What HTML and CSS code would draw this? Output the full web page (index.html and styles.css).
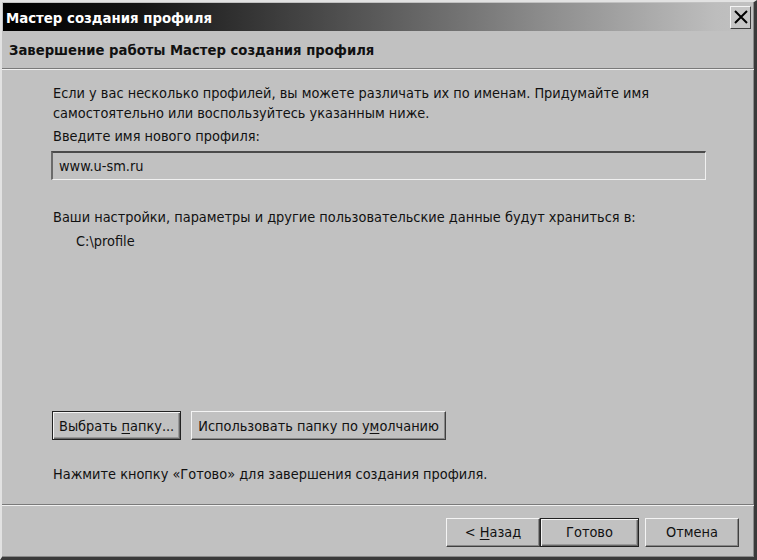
FILE: index.html
```html
<!DOCTYPE html>
<html lang="ru">
<head>
<meta charset="utf-8">
<title>Мастер создания профиля</title>
<link rel="stylesheet" href="styles.css">
</head>
<body>
<div class="window">
  <div class="titlebar">
    <span class="title">Мастер создания профиля</span>
    <span class="close" aria-label="Закрыть">
      <svg width="14" height="14" viewBox="0 0 14 14"><path d="M1 1 L13 13 M13 1 L1 13" stroke="#000" stroke-width="2"/></svg>
    </span>
  </div>
  <div class="header">Завершение работы Мастер создания профиля</div>
  <div class="content">
    <p class="intro">Если у вас несколько профилей, вы можете различать их по именам. Придумайте имя<br>самостоятельно или воспользуйтесь указанным ниже.</p>
    <p class="label">Введите имя нового профиля:</p>
    <div class="input">www.u-sm.ru</div>
    <p class="store">Ваши настройки, параметры и другие пользовательские данные будут храниться в:</p>
    <p class="path">C:\profile</p>
    <div class="spacer"></div>
    <div class="folder-buttons">
      <span class="btn btn-focus"><span>Выбрать <u>п</u>апку...</span></span>
      <span class="btn"><span>Использовать папку по у<u>м</u>олчанию</span></span>
    </div>
    <p class="finish">Нажмите кнопку «Готово» для завершения создания профиля.</p>
  </div>
  <div class="footer">
    <span class="btn btn-nav"><span>&lt; <u>Н</u>азад</span></span>
    <span class="btn btn-nav btn-focus"><span>Готово</span></span>
    <span class="btn btn-nav btn-cancel"><span>Отмена</span></span>
  </div>
</div>
</body>
</html>
```
FILE: styles.css
```css
* { box-sizing: border-box; }
html, body { margin: 0; padding: 0; }
body {
  width: 757px;
  height: 560px;
  background: #c1c1c1;
  font-family: "DejaVu Sans Condensed", "DejaVu Sans", sans-serif;
  font-size: 14.4px;
  color: #111;
  overflow: hidden;
}
.window {
  width: 757px;
  height: 560px;
  display: flex;
  flex-direction: column;
  background: #c1c1c1;
  border-style: solid;
  border-width: 2px 3px 3px 2px;
  border-color: #e2e2e2 #3a3a3a #3a3a3a #e2e2e2;
  box-shadow: inset -1px -1px 0 #8a8a8a;
}
.titlebar {
  height: 28px;
  margin: 1px 1px 0 1px;
  display: flex;
  align-items: center;
  justify-content: space-between;
  background: linear-gradient(to right, #000 0%, #141414 18%, #5a5a5a 50%, #8c8c8c 72%, #bdbdbd 95%, #c1c1c1 100%);
  padding: 0 2px 0 3px;
}
.title {
  color: #fff;
  font-weight: bold;
  font-size: 14.8px;
}
.close {
  width: 21px;
  height: 23px;
  display: flex;
  align-items: center;
  justify-content: center;
  background: #c6c6c6;
  border-style: solid;
  border-width: 1px;
  border-color: #f4f4f4 #404040 #404040 #f4f4f4;
}
.header {
  height: 38px;
  display: flex;
  align-items: center;
  padding-left: 7px;
  font-weight: bold;
  font-size: 14.7px;
  border-bottom: 1px solid #7a7a7a;
  box-shadow: 0 1px 0 #f0f0f0;
}
.content {
  flex: 1;
  display: flex;
  flex-direction: column;
  padding: 14px 49px 0 51px;
}
.content p { margin: 0; }
.intro { line-height: 20px; }
.label { margin-top: 3px !important; line-height: 20px; }
.input {
  margin-top: 5px;
  height: 29px;
  width: 655px;
  margin-left: -2px;
  display: flex;
  align-items: center;
  padding-left: 6px;
  border-style: solid;
  border-width: 2px 1px 1px 2px;
  border-color: #4a4a4a #f0f0f0 #f0f0f0 #6a6a6a;
}
.store { margin-top: 27px !important; line-height: 20px; }
.path { margin-top: 4px !important; padding-left: 23px; line-height: 20px; }
.spacer { flex: 1; }
.folder-buttons {
  display: flex;
  gap: 10px;
  margin-left: -1px;
  margin-top: -3px;
}
.btn {
  height: 29px;
  display: inline-flex;
  align-items: center;
  justify-content: center;
  padding: 0 6px;
  background: #c1c1c1;
  border-style: solid;
  border-width: 1px;
  border-color: #f4f4f4 #404040 #404040 #f4f4f4;
  box-shadow: inset -1px -1px 0 #888;
  white-space: nowrap;
}
.btn u { text-decoration: underline; text-underline-offset: 2px; }
.btn-focus {
  border: 1px solid #222;
  box-shadow: inset 1px 1px 0 #f4f4f4, inset -1px -1px 0 #666, inset -2px -2px 0 #999;
}
.finish { margin-top: 24px !important; margin-bottom: 20px !important; line-height: 20px; }
.footer {
  height: 53px;
  border-top: 1px solid #7a7a7a;
  box-shadow: inset 0 1px 0 #f0f0f0;
  display: flex;
  align-items: center;
  justify-content: flex-end;
  padding: 2px 15px 0 0;
}
.btn-nav { width: 94px; }
.btn-nav.btn-focus { width: 99px; }
.btn-cancel { margin-left: 6px; }
```
